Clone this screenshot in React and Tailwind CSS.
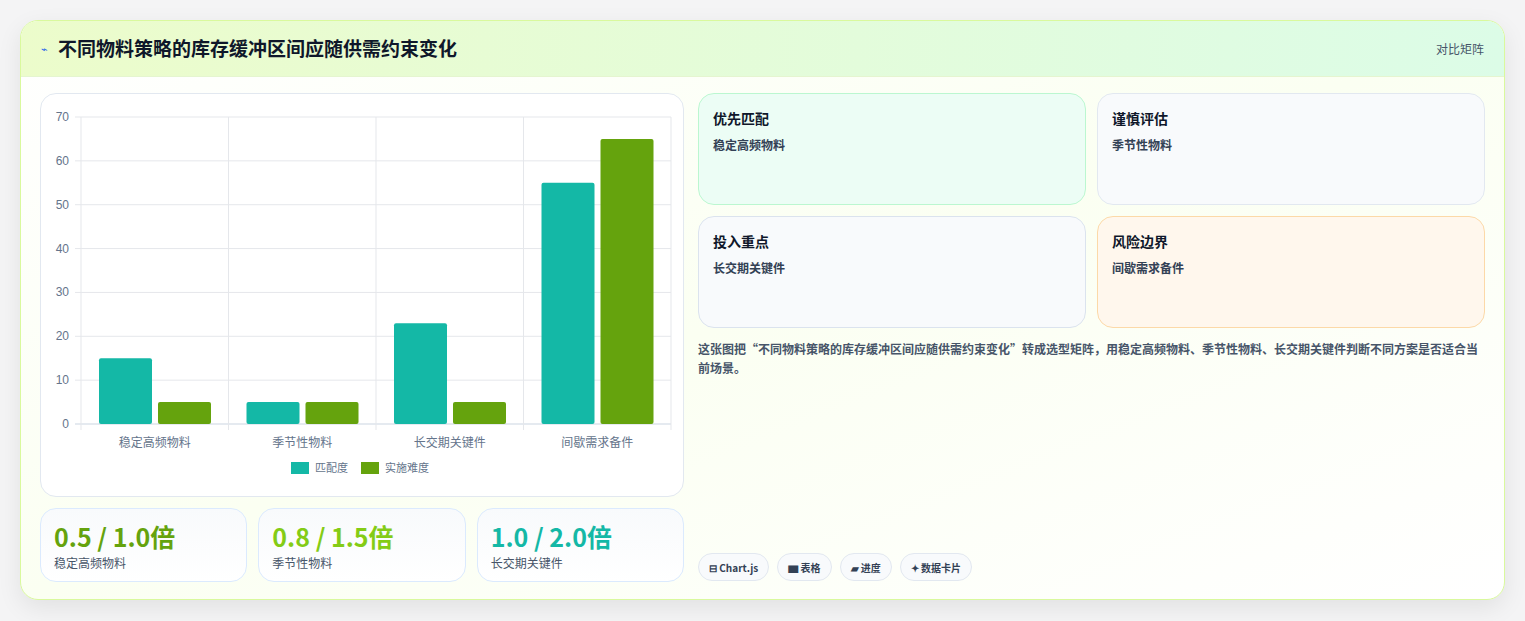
import React from 'react';

const cats = ['稳定高频物料', '季节性物料', '长交期关键件', '间歇需求备件'];
const match = [15, 5, 23, 55];
const diff = [5, 5, 5, 65];

const Chart = () => {
  // svg coords relative to chart card (card at x40,y92)
  const x0 = 40, x1 = 630, yTop = 23, yBot = 330;
  const yOf = v => yBot - (v / 70) * (yBot - yTop);
  const cw = (x1 - x0) / 4;
  return (
    <svg width="644" height="404" className="block">
      {[0, 10, 20, 30, 40, 50, 60, 70].map(v => (
        <g key={v}>
          <line x1={x0 - 6} x2={x1} y1={yOf(v)} y2={yOf(v)} stroke={v === 0 ? '#cbd5e1' : '#e5e7eb'} />
          <text x={x0 - 12} y={yOf(v) + 4} textAnchor="end" fontSize="12" fill="#64748b" fontFamily="'Liberation Sans', sans-serif">{v}</text>
        </g>
      ))}
      {[0, 1, 2, 3, 4].map(i => (
        <line key={i} x1={x0 + i * cw} x2={x0 + i * cw} y1={yTop} y2={yBot + 6} stroke="#e5e7eb" />
      ))}
      {cats.map((c, i) => {
        const cx = x0 + i * cw;
        return (
          <g key={c}>
            <rect x={cx + 18} y={yOf(match[i])} width="53" height={yBot - yOf(match[i])} rx="2" fill="#14b8a6" />
            <rect x={cx + 77} y={yOf(diff[i])} width="53" height={yBot - yOf(diff[i])} rx="2" fill="#65a30d" />
            <text x={cx + cw / 2} y={yBot + 23} textAnchor="middle" fontSize="12" fill="#64748b" fontFamily="'Noto Sans CJK SC', sans-serif">{c}</text>
          </g>
        );
      })}
      <rect x="250" y="368" width="18" height="12" fill="#14b8a6" />
      <text x="274" y="378" fontSize="11" fill="#64748b" fontFamily="'Noto Sans CJK SC', sans-serif">匹配度</text>
      <rect x="320" y="368" width="18" height="12" fill="#65a30d" />
      <text x="344" y="378" fontSize="11" fill="#64748b" fontFamily="'Noto Sans CJK SC', sans-serif">实施难度</text>
    </svg>
  );
};

const Stat = ({ v, l, c }) => (
  <div className="flex-1 h-[74px] rounded-2xl border border-[#dbeafe] bg-gradient-to-b from-[#f8fafc] to-white px-[13px] pt-[10px]">
    <div className={`text-[25px] font-bold leading-[34px] ${c}`}>{v}</div>
    <div className="text-[12px] text-[#475569] leading-[18px] mt-[1px]">{l}</div>
  </div>
);

const Card = ({ t, s, cls }) => (
  <div className={`h-[112px] rounded-2xl border px-[14px] pt-[14px] ${cls}`}>
    <div className="text-[14px] font-bold text-[#0f172a] leading-5">{t}</div>
    <div className="text-[12px] font-semibold text-[#334155] mt-[8px]">{s}</div>
  </div>
);

export default function App() {
  return (
    <div className="w-[1525px] h-[621px] bg-[#f4f4f5] pt-[20px] px-[20px]" style={{ fontFamily: "'Noto Sans CJK SC', 'Noto Sans', sans-serif" }}>
      <div className="w-[1485px] h-[580px] rounded-[18px] border border-[#d9f99d] bg-gradient-to-br from-white via-[#fbfff2] to-white shadow-[0_8px_24px_rgba(0,0,0,0.08)] overflow-hidden">
        <div className="h-[56px] flex items-center justify-between px-[20px] bg-gradient-to-r from-[#ecfccb] to-[#dcfce7] border-b border-[#e5f5d0]">
          <div className="flex items-center gap-[10px]">
            <span className="text-[11px] text-[#2563eb]">⌁</span>
            <span className="text-[19px] font-bold text-[#0f172a]">不同物料策略的库存缓冲区间应随供需约束变化</span>
          </div>
          <span className="text-[12px] text-[#475569]">对比矩阵</span>
        </div>
        <div className="flex gap-[14px] px-[19px] pt-[16px]">
          <div className="w-[644px] flex flex-col gap-[11px]">
            <div className="h-[404px] rounded-2xl border border-[#e2e8f0] bg-white overflow-hidden"><Chart /></div>
            <div className="flex gap-[11px]">
              <Stat v="0.5 / 1.0倍" l="稳定高频物料" c="text-[#65a30d]" />
              <Stat v="0.8 / 1.5倍" l="季节性物料" c="text-[#84cc16]" />
              <Stat v="1.0 / 2.0倍" l="长交期关键件" c="text-[#14b8a6]" />
            </div>
          </div>
          <div className="flex-1 flex flex-col">
            <div className="grid grid-cols-2 gap-[11px]">
              <Card t="优先匹配" s="稳定高频物料" cls="border-[#bbf7d0] bg-[#ecfdf5]" />
              <Card t="谨慎评估" s="季节性物料" cls="border-[#e2e8f0] bg-[#f8fafc]" />
              <Card t="投入重点" s="长交期关键件" cls="border-[#dbe3ee] bg-[#f8fafc]" />
              <Card t="风险边界" s="间歇需求备件" cls="border-[#fcd9a8] bg-[#fff7ed]" />
            </div>
            <p className="mt-[11px] text-[12px] font-semibold text-[#475569] leading-[19px]">这张图把“不同物料策略的库存缓冲区间应随供需约束变化”转成选型矩阵，用稳定高频物料、季节性物料、长交期关键件判断不同方案是否适合当前场景。</p>
            <div className="mt-auto mb-[1px] flex gap-[8px] pt-[170px]">
              {['⊟ Chart.js', '▆ 表格', '▰ 进度', '✦ 数据卡片'].map(t => (
                <span key={t} className="h-[28px] px-[10px] flex items-center rounded-full border border-[#e2e8f0] bg-[#f8fafc] text-[10px] font-bold text-[#334155]">{t}</span>
              ))}
            </div>
          </div>
        </div>
      </div>
    </div>
  );
}
